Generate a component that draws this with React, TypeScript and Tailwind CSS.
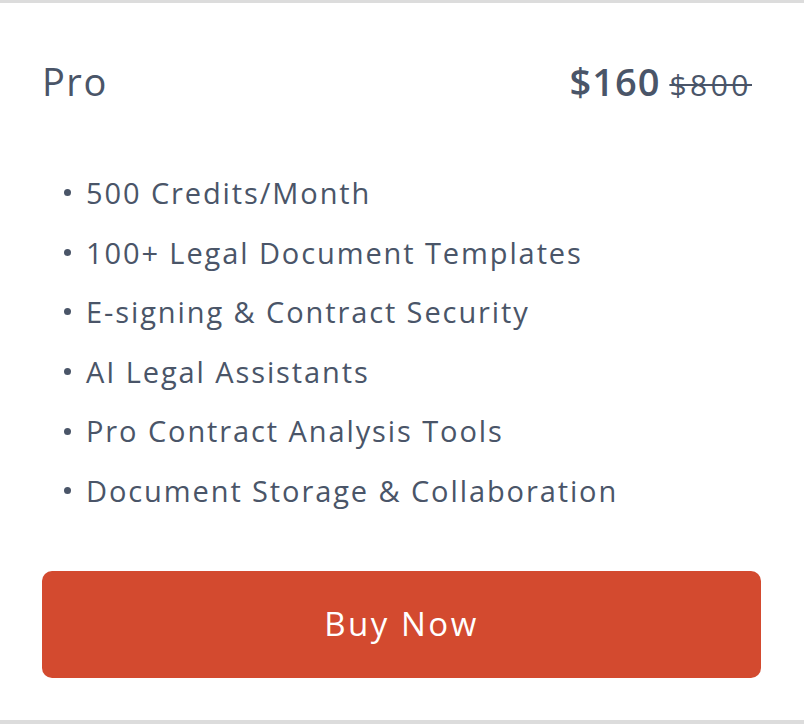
const features = [
  "500 Credits/Month",
  "100+ Legal Document Templates",
  "E-signing & Contract Security",
  "AI Legal Assistants",
  "Pro Contract Analysis Tools",
  "Document Storage & Collaboration",
];

export default function App() {
  return (
    <div className="w-[804px] h-[724px] bg-white overflow-hidden font-['Open_Sans',sans-serif] text-[#4a5568]">
      <div className="h-[724px] border-t-[3px] border-b-[4px] border-[#dcdcdc] px-[42px] pt-[54px]">
        {/* Header */}
        <div className="flex items-baseline justify-between pr-[10px]">
          <h2 className="text-[38px] leading-[48px] tracking-[1.5px]">Pro</h2>
          <div className="flex items-baseline gap-[9px]">
            <span className="text-[38px] leading-[48px] font-semibold tracking-[1px]">$160</span>
            <span className="text-[30px] leading-[48px] tracking-[3.5px] line-through decoration-2">$800</span>
          </div>
        </div>

        {/* Features */}
        <ul className="mt-[54px] pl-[22px] flex flex-col">
          {features.map((f) => (
            <li key={f} className="flex items-center h-[59.6px] text-[29px] tracking-[1.9px]">
              <span className="w-[7px] h-[7px] rounded-full bg-[#4a5568] mr-[15px]" />
              {f}
            </li>
          ))}
        </ul>

        <button className="mt-[50px] w-[719px] h-[107px] rounded-[10px] bg-[#d34a2f] text-white text-[33px] tracking-[2.5px]">
          Buy Now
        </button>
      </div>
    </div>
  );
}
